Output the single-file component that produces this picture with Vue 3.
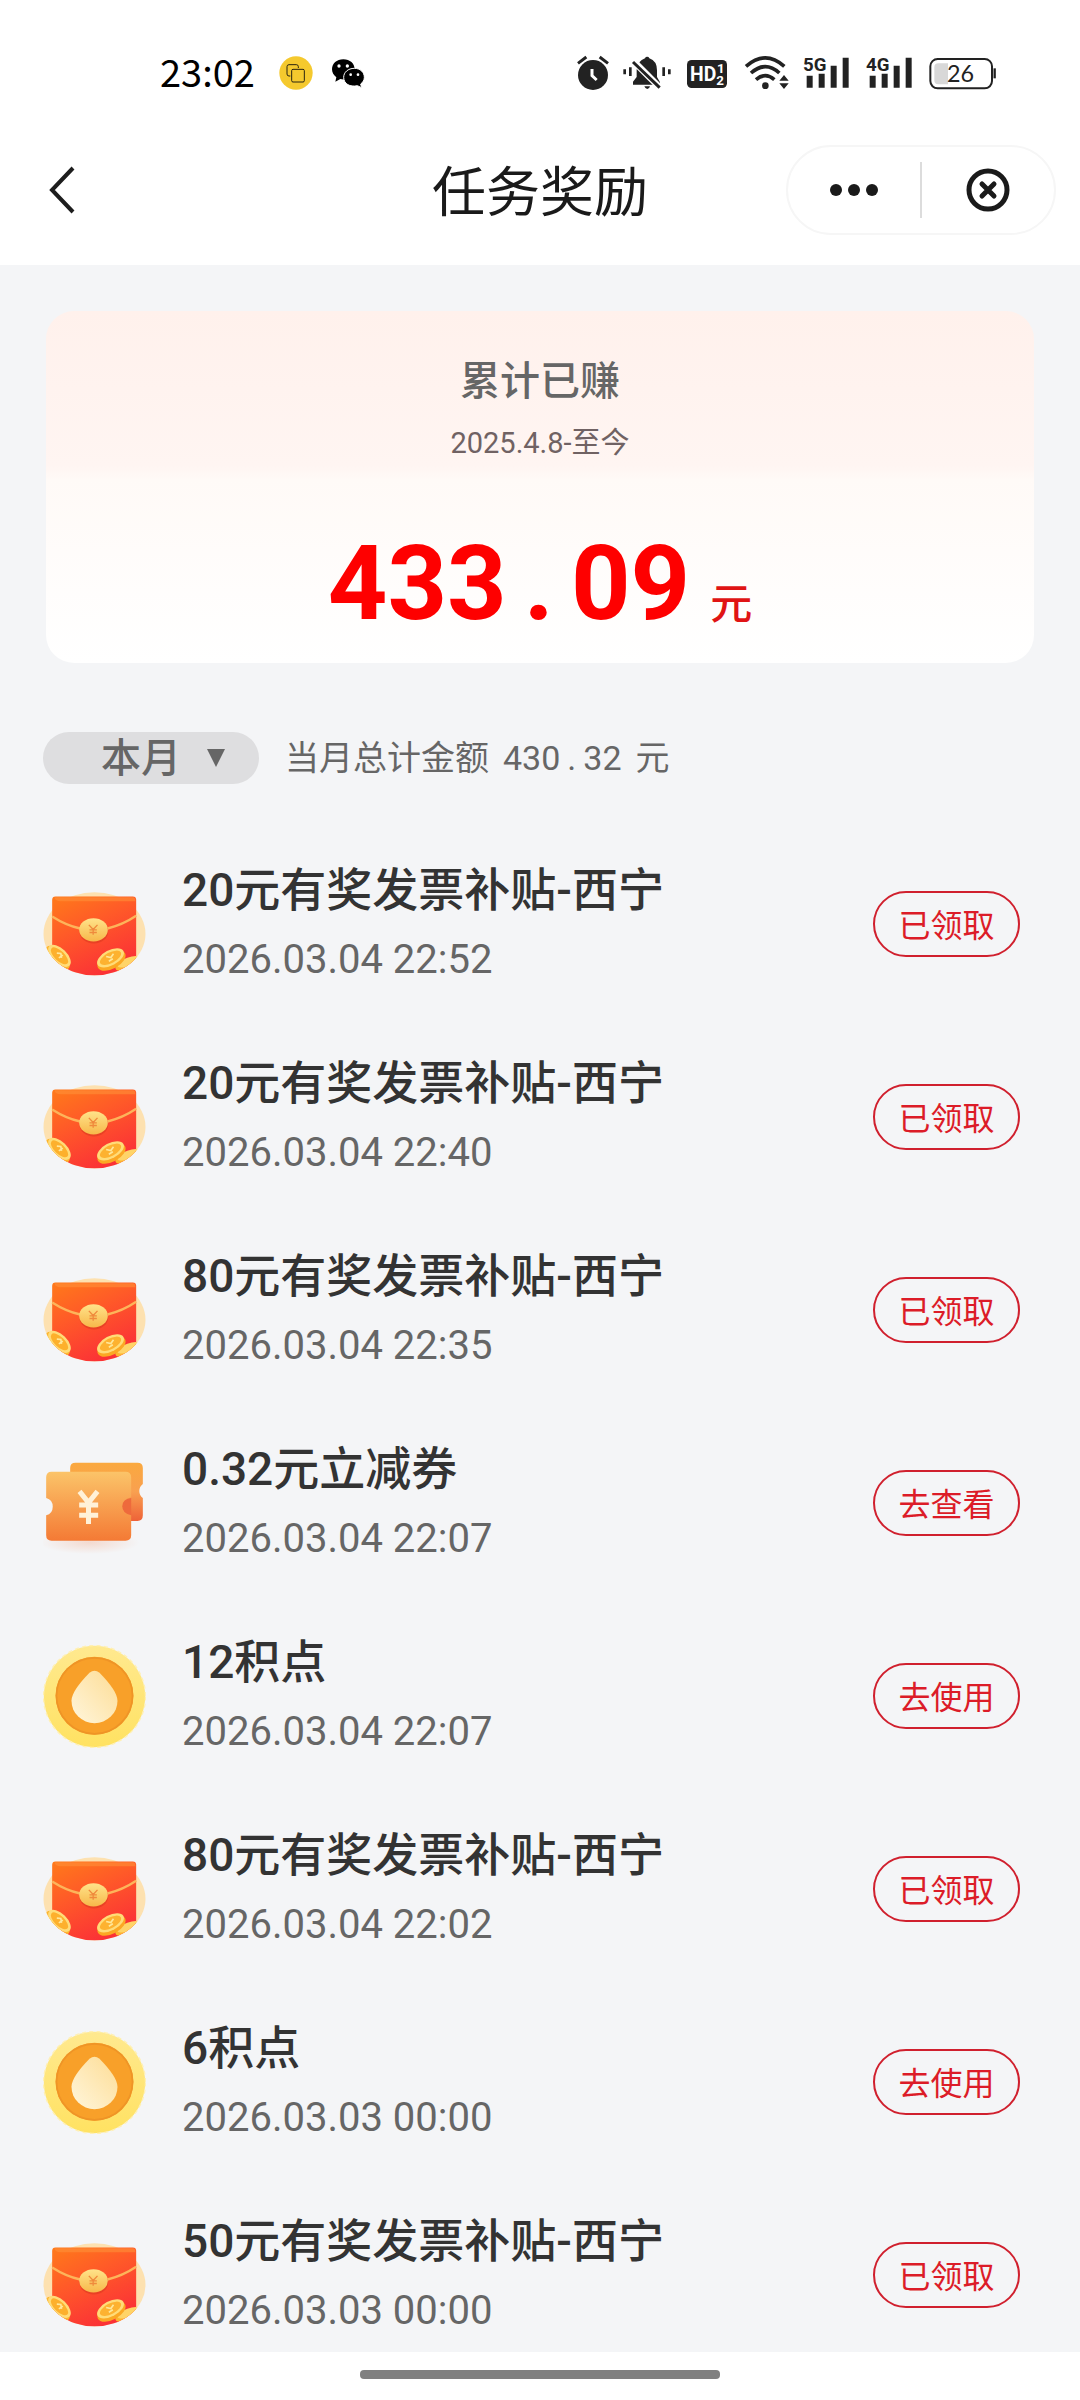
<script setup>
import { ref } from 'vue'

const month = ref('本月')

const rewards = [
  { icon: 'packet', title: '20元有奖发票补贴-西宁', time: '2026.03.04 22:52', action: '已领取' },
  { icon: 'packet', title: '20元有奖发票补贴-西宁', time: '2026.03.04 22:40', action: '已领取' },
  { icon: 'packet', title: '80元有奖发票补贴-西宁', time: '2026.03.04 22:35', action: '已领取' },
  { icon: 'ticket', title: '0.32元立减券', time: '2026.03.04 22:07', action: '去查看' },
  { icon: 'point', title: '12积点', time: '2026.03.04 22:07', action: '去使用' },
  { icon: 'packet', title: '80元有奖发票补贴-西宁', time: '2026.03.04 22:02', action: '已领取' },
  { icon: 'point', title: '6积点', time: '2026.03.03 00:00', action: '去使用' },
  { icon: 'packet', title: '50元有奖发票补贴-西宁', time: '2026.03.03 00:00', action: '已领取' }
]
</script>

<template>
  <div class="page">
    <svg class="sprite" width="0" height="0" aria-hidden="true">
      <defs>
        <linearGradient id="packetBody" x1="0" y1="0" x2=".5" y2="1">
          <stop offset="0" stop-color="#ff7a1a" />
          <stop offset=".45" stop-color="#ff5a28" />
          <stop offset="1" stop-color="#fb3236" />
        </linearGradient>
        <linearGradient id="gold" x1="0" y1="0" x2="0" y2="1">
          <stop offset="0" stop-color="#ffe38a" />
          <stop offset="1" stop-color="#f7b84a" />
        </linearGradient>
        <linearGradient id="ticketFront" x1="0" y1="0" x2="0" y2="1">
          <stop offset="0" stop-color="#fbc469" />
          <stop offset="1" stop-color="#f47a35" />
        </linearGradient>
        <linearGradient id="ticketBack" x1="0" y1="0" x2="0" y2="1">
          <stop offset="0" stop-color="#faa93f" />
          <stop offset=".5" stop-color="#f9a050" />
          <stop offset="1" stop-color="#ee6238" />
        </linearGradient>
        <radialGradient id="ticketShade">
          <stop offset="0" stop-color="#f3b9a0" stop-opacity=".45" />
          <stop offset="1" stop-color="#f3b9a0" stop-opacity="0" />
        </radialGradient>
        <linearGradient id="coinRim" x1="0" y1="0" x2="0" y2="1">
          <stop offset="0" stop-color="#ffe98f" />
          <stop offset="1" stop-color="#ffe262" />
        </linearGradient>
        <linearGradient id="drop" x1="0" y1="1" x2="1" y2="0">
          <stop offset="0" stop-color="#fff6dc" />
          <stop offset="1" stop-color="#fddc94" />
        </linearGradient>
        <clipPath id="packetClip">
          <path d="M42 60H348V190A153 125 0 0 1 42 190Z" />
        </clipPath>
      </defs>
      <symbol id="packet" viewBox="0 0 103 103">
        <g transform="translate(-13.5 -2.5) scale(.33333)">
          <ellipse cx="195" cy="190" rx="153" ry="125" fill="#fde1b0" />
          <g clip-path="url(#packetClip)">
            <path d="M68 88Q68 78 78 78H310Q320 78 320 88V320H68Z" fill="url(#packetBody)" />
            <path d="M76 80H312Q318 82 318 92H92Q80 92 76 84Z" fill="#ff9038" opacity=".6" />
            <path d="M68 138Q110 165 152 174M234 174Q280 163 320 136" fill="none" stroke="#fdb45a" stroke-width="7" />
            <ellipse cx="193" cy="184" rx="43" ry="35" fill="#dc3a20" opacity=".6" />
            <ellipse cx="192" cy="178" rx="43" ry="35" fill="url(#gold)" />
            <path d="M178 163l13 14 13-14M191 177v16M180 178h22M180 186h22" fill="none" stroke="#ef8a3c" stroke-width="4" />
            <ellipse cx="84" cy="262" rx="46" ry="24" transform="rotate(44 84 262)" fill="#fdb52e" />
            <ellipse cx="90" cy="256" rx="42" ry="22" transform="rotate(44 90 256)" fill="#ffdc78" />
            <ellipse cx="90" cy="256" rx="33" ry="15" transform="rotate(44 90 256)" fill="#fdb02c" />
            <path d="M82 248l12 1 2 13M88 262l12-8" fill="none" stroke="#ffe79a" stroke-width="5" />
            <ellipse cx="294" cy="282" rx="38" ry="16" transform="rotate(-20 294 282)" fill="#fdb52e" />
            <ellipse cx="298" cy="274" rx="36" ry="13" transform="rotate(-20 298 274)" fill="#ffd468" />
            <ellipse cx="246" cy="270" rx="46" ry="25" transform="rotate(-28 246 270)" fill="#fba823" />
            <ellipse cx="243" cy="262" rx="44" ry="23" transform="rotate(-28 243 262)" fill="#ffdc78" />
            <ellipse cx="243" cy="262" rx="35" ry="16" transform="rotate(-28 243 262)" fill="#fdb230" />
            <path d="M230 258l14 3 8-11M238 272l12-7" fill="none" stroke="#ffe79a" stroke-width="5" />
          </g>
        </g>
      </symbol>
      <symbol id="ticket" viewBox="0 0 103 103">
        <g transform="translate(-13.5 -12) scale(.33333)">
          <ellipse cx="180" cy="308" rx="150" ry="34" fill="url(#ticketShade)" />
          <path d="M138 68H324Q340 68 340 84V132A26 26 0 0 0 340 174V226Q340 243 324 243H122V84Q122 68 138 68Z" fill="url(#ticketBack)" />
          <path d="M305 174Q278 178 278 199T305 228Z" fill="#ee6a3c" />
          <path d="M66 95H288Q305 95 305 112V172Q278 178 278 199T305 226V286Q305 302 288 302H66Q50 302 50 286V226A27 27 0 0 0 50 174V112Q50 95 66 95Z" fill="url(#ticketFront)" />
          <path d="M150 154L177 188L204 154M177 186V252M149 195H206M149 226H206" fill="none" stroke="#fff1d8" stroke-width="15" />
        </g>
      </symbol>
      <symbol id="point" viewBox="0 0 103 103">
        <g transform="translate(-13.5 -14.5) scale(.33333)">
          <circle cx="195" cy="198" r="152" fill="url(#coinRim)" />
          <circle cx="195" cy="198" r="153" fill="none" stroke="#fff0b4" stroke-width="4" stroke-dasharray="12 10" />
          <circle cx="195" cy="196" r="117" fill="#f8a029" />
          <circle cx="195" cy="196" r="114" fill="none" stroke="#ef9426" stroke-width="5" />
          <path d="M180 127Q195 114 210 127Q264 182 264 211A69 67 0 0 1 126 211Q126 182 180 127Z" fill="url(#drop)" />
        </g>
      </symbol>
    </svg>

    <header class="top">
      <div class="status">
        <span class="clock">23:02</span>
        <svg class="app-dot" width="34" height="34" viewBox="0 0 102 102">
          <circle cx="51" cy="51" r="50" fill="#f5c92e" />
          <path d="M34 60h-4q-6 0-6-6V32q0-6 6-6h22q6 0 6 6v4" fill="none" stroke="#2a2410" stroke-width="3" />
          <rect x="38" y="40" width="38" height="38" rx="4" fill="none" stroke="#2a2410" stroke-width="3" />
        </svg>
        <svg class="wechat" width="34" height="30" viewBox="0 0 102 90">
          <path d="M37 4C17 4 3 17 3 34c0 10 5 18 13 24l-3 13 15-8c20 5 43-7 43-29C71 17 57 4 37 4Z" />
          <path d="M70 31c-19 0-32 12-32 27 0 20 20 30 41 25l13 6-3-11c7-5 11-12 11-20 0-15-12-27-30-27Z" stroke="#fff" stroke-width="3" />
          <g fill="#fff"><circle cx="24" cy="24" r="5" /><circle cx="49" cy="24" r="5" /><circle cx="59" cy="50" r="4" /><circle cx="81" cy="50" r="4" /></g>
        </svg>
        <div class="signals">
          <svg width="32" height="34" viewBox="54 45 96 102">
            <circle cx="102" cy="102" r="45" />
            <path d="M57 67L82 48M147 67L122 48" stroke="#222" stroke-width="9" />
            <path d="M99 84V104L113 117" fill="none" stroke="#fff" stroke-width="9" />
          </svg>
          <svg class="gap-s" width="50" height="34" viewBox="189 45 150 102">
            <path d="M258 52a7 7 0 0 1 13 0Q294 60 294 88V108L303 124V131H222V122L233 108V86Q236 60 258 52Z" />
            <path d="M256 136h17q-2 8-8 8t-9-8Z" />
            <path d="M224 61L304 141" stroke="#fff" stroke-width="20" />
            <path d="M222 63L302 140" stroke="#222" stroke-width="9" />
            <path d="M197 85V100M214 79V105M314 79V105M331 85V100" stroke="#222" stroke-width="8" />
          </svg>
          <svg class="gap-m" width="40" height="34" viewBox="384 45 120 102">
            <rect x="384" y="57" width="120" height="84" rx="14" />
            <g fill="#fff" font-family="Roboto, sans-serif" font-weight="700">
              <text x="393" y="121" font-size="58">HD</text>
              <text x="474" y="97" font-size="40">1</text>
              <text x="472" y="132" font-size="40">2</text>
            </g>
          </svg>
          <svg class="gap-l" width="46" height="34" viewBox="556 45 138 102">
            <g fill="none" stroke="#222" stroke-width="11">
              <path d="M562 76Q620 25 677 76" /><path d="M577 96Q620 58 662 96" /><path d="M592 116Q620 92 647 116" />
            </g>
            <circle cx="620" cy="134" r="10" />
            <path d="M662 119L676 102L690 119ZM662 127L676 144L690 127Z" />
          </svg>
          <svg class="gap-s" width="46" height="34" viewBox="732 45 138 102">
            <text x="732" y="89" font-size="56" font-family="Roboto, sans-serif" font-weight="700">5G</text>
            <path d="M752 104V140M788 98V140M824 74V140M860 50V140" stroke="#222" stroke-width="18" />
          </svg>
          <svg class="gap-l" width="46" height="34" viewBox="921 45 138 102">
            <text x="921" y="89" font-size="56" font-family="Roboto, sans-serif" font-weight="700">4G</text>
            <path d="M941 104V140M977 98V140M1013 74V140M1049 50V140" stroke="#222" stroke-width="18" />
          </svg>
          <svg class="gap-l" width="68" height="34" viewBox="1106 45 204 102">
            <rect x="1110" y="54" width="185" height="88" rx="22" fill="#fff" stroke="#222" stroke-width="6" />
            <path d="M1163 67V130H1134Q1122 130 1122 118V79Q1122 67 1134 67Z" fill="#d8d8d8" />
            <path d="M1303 82V112" stroke="#222" stroke-width="7" />
            <text x="1160" y="123" font-size="70" font-family="Lato, sans-serif">26</text>
          </svg>
        </div>
      </div>
      <nav class="nav">
        <button class="back" type="button" aria-label="返回">
          <svg width="28" height="48" viewBox="0 0 28 48"><path d="M25 2L4 24L25 46" fill="none" stroke="#1d1d1d" stroke-width="4" /></svg>
        </button>
        <h1>任务奖励</h1>
        <div class="capsule">
          <button type="button" aria-label="更多">
            <svg width="48" height="14" viewBox="0 0 48 14" fill="#1a1a1a"><circle cx="6" cy="7" r="6" /><circle cx="24" cy="7" r="6" /><circle cx="42" cy="7" r="6" /></svg>
          </button>
          <span class="divider"></span>
          <button type="button" aria-label="关闭">
            <svg width="44" height="44" viewBox="0 0 44 44" fill="none" stroke="#1a1a1a" stroke-width="5"><circle cx="22" cy="22" r="19" /><path d="M16 16L28 28M28 16L16 28" stroke-linecap="round" /></svg>
          </button>
        </div>
      </nav>
    </header>

    <main>
      <section class="card">
        <h2>累计已赚</h2>
        <p class="since">2025.4.8-至今</p>
        <p class="total"><span class="digits">433<span class="dot">.</span>09</span><span class="unit">元</span></p>
      </section>

      <div class="filter">
        <label class="month">
          <select v-model="month" aria-label="月份">
            <option>本月</option>
          </select>
          <svg width="18" height="18" viewBox="0 0 18 18"><path d="M0 0H18L9 18Z" fill="#666" /></svg>
        </label>
        <p class="sum"><span>当月总计金额</span><span>430<span class="dot">.</span>32</span><span>元</span></p>
      </div>

      <ul class="rewards">
        <li v-for="(item, i) in rewards" :key="i">
          <svg class="icon" width="103" height="103"><use :href="'#' + item.icon" /></svg>
          <div class="info">
            <h3>{{ item.title }}</h3>
            <time>{{ item.time }}</time>
          </div>
          <button class="action" type="button">{{ item.action }}</button>
        </li>
      </ul>
    </main>

    <footer class="home"><span></span></footer>
  </div>
</template>

<style>
body {
  margin: 0;
  background: #fff;
}
</style>

<style scoped>
.page {
  font-family: Roboto, "Noto Sans CJK SC", sans-serif;
  color: #666;
  background: #f4f5f7;
}
h1, h2, h3, p, ul {
  margin: 0;
  padding: 0;
}
button {
  padding: 0;
  border: 0;
  background: none;
  font-family: inherit;
  cursor: pointer;
}
svg {
  display: block;
  flex: none;
}
.sprite {
  position: absolute;
}
.top {
  background: #fff;
}
.status {
  box-sizing: border-box;
  height: 115px;
  padding: 30px 83px 0 160px;
  display: flex;
  align-items: center;
}
.clock {
  height: 44px;
  font-family: "Noto Sans CJK SC", sans-serif;
  font-size: 38px;
  font-weight: 400;
  line-height: 40px;
  color: #000;
}
.app-dot {
  margin-left: 24px;
}
.wechat {
  margin-left: 18px;
}
.signals {
  margin-left: auto;
  display: flex;
  fill: #222;
}
.signals svg {
  overflow: visible;
}
.gap-s {
  margin-left: 13px;
}
.gap-m {
  margin-left: 15px;
}
.gap-l {
  margin-left: 17px;
}
.nav {
  height: 150px;
  display: grid;
  grid-template-columns: 1fr auto 1fr;
  align-items: center;
}
.back {
  justify-self: start;
  margin-left: 48px;
}
.nav h1 {
  padding-top: 8px;
  font-size: 54px;
  font-weight: 400;
  line-height: 60px;
  color: #1a1a1a;
}
.capsule {
  justify-self: end;
  box-sizing: border-box;
  width: 270px;
  height: 90px;
  margin-right: 24px;
  border: 2px solid #f6f6f6;
  border-radius: 45px;
  display: flex;
  align-items: center;
}
.capsule button {
  flex: 1;
  display: flex;
  justify-content: center;
}
.divider {
  width: 2px;
  height: 56px;
  background: #dcdcdc;
}
main {
  padding: 46px 0 4px;
}
.card {
  margin: 0 46px;
  padding: 46px 0 29px;
  border-radius: 28px;
  background: linear-gradient(#fff1ec, #fff5f2 44%, #fffaf7 48%, #fff);
  text-align: center;
}
.card h2 {
  font-size: 40px;
  font-weight: 500;
  line-height: 50px;
}
.since {
  margin-top: 16px;
  font-size: 29px;
  line-height: 40px;
  color: #706263;
}
.total {
  margin-top: 71px;
  height: 100px;
  display: flex;
  justify-content: center;
  align-items: baseline;
  gap: 20px;
  line-height: 100px;
}
.digits {
  font-size: 104px;
  font-weight: 700;
  color: #fe0000;
}
.digits .dot {
  padding: 0 17px;
}
.unit {
  font-size: 42px;
  font-weight: 500;
  color: #e01414;
}
.filter {
  margin: 69px 43px 0;
  display: flex;
  align-items: center;
  gap: 26px;
}
.month {
  width: 216px;
  height: 52px;
  border-radius: 26px;
  background: #dedee0;
  display: flex;
  align-items: center;
}
.month select {
  appearance: none;
  width: 164px;
  height: 52px;
  padding: 0 0 0 58px;
  border: 0;
  background: none;
  font-family: inherit;
  font-size: 40px;
  font-weight: 500;
  color: #666;
}
.sum {
  display: flex;
  gap: 14px;
  font-size: 34px;
  line-height: 52px;
}
.sum .dot {
  padding: 0 7px;
}
.rewards {
  margin-top: 67px;
  padding: 0 60px 0 43px;
  list-style: none;
  display: flex;
  flex-direction: column;
  gap: 47px;
}
.rewards li {
  height: 146px;
  display: flex;
  align-items: center;
}
.info {
  flex: 1;
  margin-left: 36px;
  padding-top: 2px;
  line-height: 70px;
}
.info h3 {
  font-size: 46px;
  font-weight: 500;
  color: #333;
}
.info time {
  display: block;
  font-size: 40px;
}
.action {
  box-sizing: border-box;
  width: 147px;
  height: 66px;
  padding-bottom: 2px;
  border: 2px solid #d0202e;
  border-radius: 33px;
  font-size: 32px;
  color: #dc1c28;
}
.home {
  height: 48px;
  background: #fff;
  display: flex;
  justify-content: center;
}
.home span {
  width: 360px;
  height: 9px;
  margin-top: 18px;
  border-radius: 4px;
  background: #808080;
}
</style>
